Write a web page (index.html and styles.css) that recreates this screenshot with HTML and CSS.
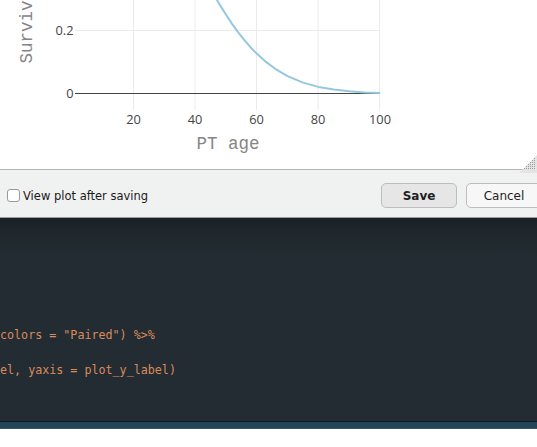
FILE: index.html
```html
<!DOCTYPE html>
<html>
<head>
<meta charset="utf-8">
<link rel="stylesheet" href="styles.css">
</head>
<body>
<div class="plot">
  <svg class="chart" width="537" height="169" viewBox="0 0 537 169">
    <g class="grid">
      <line x1="133.5" y1="0" x2="133.5" y2="110"/>
      <line x1="195" y1="0" x2="195" y2="110"/>
      <line x1="256.5" y1="0" x2="256.5" y2="110"/>
      <line x1="318" y1="0" x2="318" y2="110"/>
      <line x1="379.5" y1="0" x2="379.5" y2="110"/>
      <line x1="75" y1="30.5" x2="380" y2="30.5"/>
    </g>
    <line class="zero" x1="75" y1="93.5" x2="380" y2="93.5"/>
    <polyline class="curve" points="213.5,-6 219.7,4.6 225.9,14.5 232,23.8 238.2,32.3 244.4,40.1 250.5,47.2 256.7,53.6 266,61.9 275.2,68.8 287.6,76.1 303,82.6 318.4,86.9 333.8,89.6 349.2,91.3 364.7,92.4 380.1,93"/>
    <g class="ticks">
      <text x="133.5" y="124.3" text-anchor="middle">20</text>
      <text x="195" y="124.3" text-anchor="middle">40</text>
      <text x="256.5" y="124.3" text-anchor="middle">60</text>
      <text x="318" y="124.3" text-anchor="middle">80</text>
      <text x="380" y="124.3" text-anchor="middle">100</text>
      <text x="73.5" y="35" text-anchor="end">0.2</text>
      <text x="73.5" y="98.3" text-anchor="end">0</text>
    </g>
    <text class="title" x="228" y="148.5" text-anchor="middle">PT age</text>
    <text class="title" transform="translate(31.5,63.5) rotate(-90)">Survival probability</text>
  </svg>
  <svg class="grip" width="18" height="18" viewBox="0 0 18 18">
    <polygon points="18,0 18,18 0,18" fill="#e4e4e4"/>
    <g fill="#9a9a9a">
      <rect x="15" y="3" width="1" height="1"/>
      <rect x="13" y="5" width="1" height="1"/><rect x="15" y="5" width="1" height="1"/>
      <rect x="11" y="7" width="1" height="1"/><rect x="13" y="7" width="1" height="1"/><rect x="15" y="7" width="1" height="1"/>
      <rect x="9" y="9" width="1" height="1"/><rect x="11" y="9" width="1" height="1"/><rect x="13" y="9" width="1" height="1"/><rect x="15" y="9" width="1" height="1"/>
      <rect x="7" y="11" width="1" height="1"/><rect x="9" y="11" width="1" height="1"/><rect x="11" y="11" width="1" height="1"/><rect x="13" y="11" width="1" height="1"/><rect x="15" y="11" width="1" height="1"/>
      <rect x="5" y="13" width="1" height="1"/><rect x="7" y="13" width="1" height="1"/><rect x="9" y="13" width="1" height="1"/><rect x="11" y="13" width="1" height="1"/><rect x="13" y="13" width="1" height="1"/><rect x="15" y="13" width="1" height="1"/>
    </g>
  </svg>
</div>
<div class="bar">
  <label class="check"><span class="box"></span><span>View plot after saving</span></label>
  <div class="buttons">
    <button class="btn save">Save</button>
    <button class="btn cancel">Cancel</button>
  </div>
</div>
<div class="code">
  <div class="line">colors = "Paired") %&gt;%</div>
  <div class="line">&nbsp;</div>
  <div class="line">el, yaxis = plot_y_label)</div>
</div>
<div class="status"></div>
</body>
</html>
```
FILE: styles.css
```css
html, body {
  margin: 0;
  padding: 0;
  background: #ffffff;
  width: 537px;
  height: 447px;
  overflow: hidden;
}

.plot {
  position: relative;
  height: 169px;
  background: #ffffff;
}

.chart {
  display: block;
}

.grid line {
  stroke: #ebebeb;
  stroke-width: 1;
}

.zero {
  stroke: #444444;
  stroke-width: 1;
}

.curve {
  fill: none;
  stroke: #93c8de;
  stroke-width: 2;
  stroke-linejoin: round;
}

.ticks text {
  font-family: "Open Sans", sans-serif;
  font-size: 12.8px;
  fill: #444444;
}

.title {
  font-family: "Liberation Mono", monospace;
  font-size: 17.5px;
  fill: #858585;
}

.grip {
  position: absolute;
  right: 0;
  top: 155px;
  display: block;
}

.bar {
  height: 49px;
  box-sizing: border-box;
  background: #f0f1f1;
  border-top: 1px solid #b5b5b5;
  border-bottom: 1px solid #9c9c9c;
  display: flex;
  align-items: center;
  justify-content: space-between;
  padding-left: 7px;
  padding-top: 4px;
}

.check {
  display: flex;
  align-items: center;
  gap: 3px;
  font-family: "DejaVu Sans", sans-serif;
  font-size: 11.5px;
  color: #1a1a1a;
}

.box {
  width: 11px;
  height: 11px;
  border: 1px solid #9a9a9a;
  border-radius: 3px;
  background: #ffffff;
}

.buttons {
  display: flex;
  gap: 9px;
  margin-right: -5px;
}

.btn {
  width: 76px;
  height: 25px;
  box-sizing: border-box;
  border: 1px solid #bdbdbd;
  border-radius: 5px;
  font-family: "DejaVu Sans", sans-serif;
  font-size: 12px;
  color: #1e1e1e;
  padding: 0;
}

.save {
  background: #e6e6e6;
  font-weight: bold;
}

.cancel {
  background: #f7f7f7;
}

.code {
  height: 203px;
  box-sizing: border-box;
  background: linear-gradient(#1b2227 0px, #1f272c 14px, #222c32 40px, #222c32 100%);
  padding-top: 109px;
  font-family: "DejaVu Sans Mono", monospace;
  font-size: 11.7px;
  line-height: 17.5px;
  color: #dc8a5c;
}

.line {
  white-space: pre;
}

.status {
  height: 8px;
  box-sizing: border-box;
  background: #24445a;
  border-top: 1px solid #0d1b24;
  border-bottom: 1px solid #3c5566;
}
```
